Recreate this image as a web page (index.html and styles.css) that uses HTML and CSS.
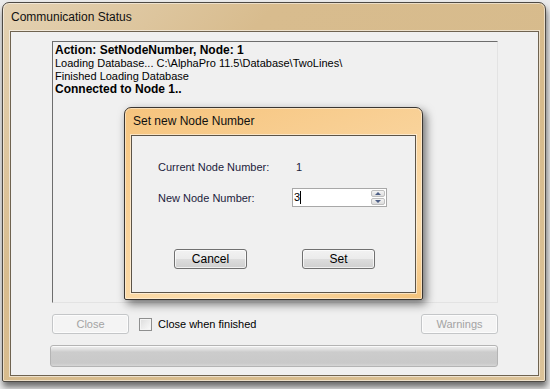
FILE: index.html
```html
<!DOCTYPE html>
<html lang="en">
<head>
  <meta charset="UTF-8">
  <title>Communication Status</title>
  <link rel="stylesheet" href="styles.css">
</head>
<body>
  <!-- main window -->
  <div class="window">
    <div class="title">Communication Status</div>
    <div class="client">
      <div class="log">
        <div class="bold">Action: SetNodeNumber, Node: 1</div>
        <div>Loading Database... C:\AlphaPro 11.5\Database\TwoLines\</div>
        <div>Finished Loading Database</div>
        <div class="bold">Connected to Node 1..</div>
      </div>
      <div class="actions">
        <button class="btn" disabled>Close</button>
        <label class="check"><span class="box"></span>Close when finished</label>
        <button class="btn warn" disabled>Warnings</button>
      </div>
      <div class="progress"></div>
    </div>
  </div>

  <!-- modal dialog -->
  <div class="dialog">
    <div class="dlg-title">Set new Node Number</div>
    <div class="dlg-client">
      <div class="form">
        <span>Current Node Number:</span>
        <span class="value">1</span>
        <span>New Node Number:</span>
        <div class="spin">
          <span class="spin-text">3<span class="caret"></span></span>
          <div class="spin-btns">
            <span class="arrow up"></span>
            <span class="arrow down"></span>
          </div>
        </div>
      </div>
      <div class="dlg-buttons">
        <button class="btn">Cancel</button>
        <button class="btn">Set</button>
      </div>
    </div>
  </div>
</body>
</html>
```

FILE: styles.css
```css
* {
  margin: 0;
  padding: 0;
  box-sizing: border-box;
}

body {
  width: 550px;
  height: 389px;
  overflow: hidden;
  background: #ececec;
  font-family: 'Liberation Sans', Arial, sans-serif;
  font-size: 11px;
  color: #000;
  position: relative;
}

/* main window */
.window {
  margin: 2px 0 0 2px;
  width: 544px;
  height: 380px;
  border: 1px solid #4e4a44;
  border-radius: 7px 7px 2px 2px;
  background: linear-gradient(135deg, #e4d2b3 0%, #d8bc8e 30%, #d7bb8c 70%, #dcc399 100%);
  padding: 0 6px 5px 7px;
  display: flex;
  flex-direction: column;
  box-shadow: 1px 5px 6px rgba(0, 0, 0, 0.55), inset 0 0 0 1px rgba(255, 255, 255, 0.5);
}

.title {
  height: 28px;
  line-height: 29px;
  font-size: 12px;
  padding-left: 1px;
  color: #101010;
}

.client {
  flex: 1;
  background: #f0f0f0;
  border: 1px solid #6f6350;
  box-shadow: 0 0 0 1px rgba(255, 255, 255, 0.55);
  padding: 9px 0 0 41px;
}

.log {
  width: 446px;
  height: 262px;
  border: 1px solid #a0a0a0;
  border-top-color: #6d6d6d;
  border-left-color: #6d6d6d;
  border-right-color: #e3e3e3;
  border-bottom-color: #e3e3e3;
  padding: 2px 0 0 2px;
  line-height: 13px;
}

.log .bold {
  font-weight: bold;
  font-size: 12px;
}

.actions {
  display: flex;
  align-items: center;
  width: 446px;
  margin-top: 11px;
  height: 20px;
}

.btn {
  width: 77px;
  height: 20px;
  font-family: 'Liberation Sans', Arial, sans-serif;
  font-size: 11px;
  color: #000;
  border: 1px solid #707070;
  border-radius: 3px;
  background: linear-gradient(#f2f2f2 0%, #ebebeb 50%, #dddddd 51%, #cfcfcf 100%);
  box-shadow: inset 0 0 0 1px rgba(255, 255, 255, 0.7);
}

.btn:disabled {
  color: #a3a3a3;
  border-color: #c4c6c8;
  background: #f4f4f4;
}

.check {
  display: flex;
  align-items: center;
  margin-left: 10px;
  gap: 6px;
  font-size: 11px;
}

.box {
  width: 13px;
  height: 13px;
  border: 1px solid #8e8f8f;
  background: linear-gradient(135deg, #dcdcdc, #fbfbfb);
  box-shadow: inset 0 0 0 1px #f4f4f4;
}

.warn {
  margin-left: auto;
}

.progress {
  width: 448px;
  height: 22px;
  margin: 11px 0 0 -2px;
  border: 1px solid #b4b4b4;
  border-radius: 3px;
  background: linear-gradient(#eeeeee 0%, #e2e2e2 15%, #cccccc 30%, #c9c9c9 85%, #d6d6d6 100%);
  box-shadow: inset 0 1px 0 #fafafa;
}

/* modal dialog */
.dialog {
  position: absolute;
  left: 124px;
  top: 107px;
  width: 299px;
  height: 193px;
  border: 1px solid #3a3632;
  border-radius: 7px 7px 2px 2px;
  background: linear-gradient(160deg, #f6c47d 0%, #f9d39b 45%, #fbdcab 75%, #f3c27b 100%);
  padding: 0 6px 6px 6px;
  display: flex;
  flex-direction: column;
  box-shadow: 3px 4px 10px rgba(0, 0, 0, 0.55), inset 0 0 0 1px rgba(255, 255, 255, 0.45);
}

.dlg-title {
  height: 27px;
  line-height: 26px;
  font-size: 12px;
  padding-left: 2px;
  color: #101010;
}

.dlg-client {
  flex: 1;
  background: #f0f0f0;
  border: 1px solid #5c5448;
  box-shadow: 0 0 0 1px rgba(255, 255, 255, 0.5);
}

.form {
  display: grid;
  grid-template-columns: 134px 95px;
  grid-auto-rows: 19px;
  row-gap: 12px;
  align-items: center;
  padding: 21px 0 0 26px;
  color: #1c1c3c;
}

.value {
  padding-left: 4px;
}

.spin {
  display: flex;
  height: 19px;
  border: 1px solid #a8a8a8;
  background: #fff;
}

.spin-text {
  flex: 1;
  padding-left: 1px;
  line-height: 17px;
  color: #000;
  display: flex;
  align-items: center;
}

.caret {
  width: 1px;
  height: 13px;
  background: #000;
}

.spin-btns {
  width: 15px;
  display: flex;
  flex-direction: column;
  gap: 1px;
  padding: 1px 1px 1px 0;
}

.arrow {
  flex: 1;
  border: 1px solid #bfbfbf;
  border-radius: 2px;
  background: linear-gradient(#f4f4f4, #dcdcdc);
  display: flex;
  align-items: center;
  justify-content: center;
}

.arrow::after {
  content: '';
  border-left: 3px solid transparent;
  border-right: 3px solid transparent;
}

.up::after {
  border-bottom: 3px solid #4d5f86;
}

.down::after {
  border-top: 3px solid #4d5f86;
}

.dlg-buttons {
  display: flex;
  gap: 55px;
  padding: 42px 0 0 42px;
}

.dlg-buttons .btn {
  width: 73px;
  font-size: 12px;
}
```
